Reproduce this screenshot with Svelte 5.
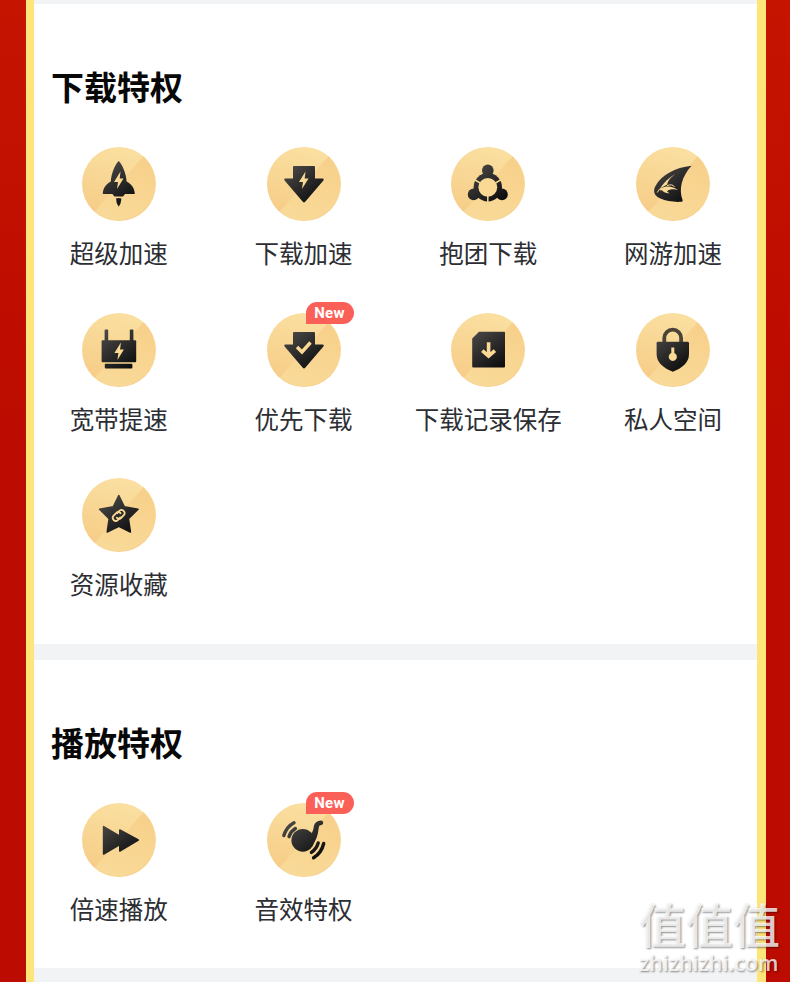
<script>
  const bolt = "M38.5 24.5 L32 35 H36 L35 42 L41.5 31.5 H37.7 Z";
  const downArrow =
    "M27 19 H47 Q48 19 48 20 V31.6 H56 Q57.4 32 56.4 33.4 L38.2 54.8 Q37 56 35.8 54.8 L17.6 33.4 Q16.6 32 18 31.6 H26 V20 Q26 19 27 19 Z";

  const sections = [
    {
      title: "下载特权",
      items: [
        { icon: "rocket", label: "超级加速" },
        { icon: "boost", label: "下载加速" },
        { icon: "group", label: "抱团下载" },
        { icon: "fin", label: "网游加速" },
        { icon: "router", label: "宽带提速" },
        { icon: "priority", label: "优先下载", isNew: true },
        { icon: "record", label: "下载记录保存" },
        { icon: "lock", label: "私人空间" },
        { icon: "star", label: "资源收藏" },
      ],
    },
    {
      title: "播放特权",
      items: [
        { icon: "forward", label: "倍速播放" },
        { icon: "music", label: "音效特权", isNew: true },
      ],
    },
  ];
</script>

<div class="page">
  <!-- gradients shared by all the icons -->
  <svg class="defs" width="0" height="0">
    <defs>
      <linearGradient id="gold" x1="0.4" y1="0" x2="0.1" y2="1">
        <stop offset="0" stop-color="#fadfa0" />
        <stop offset="1" stop-color="#f6ca84" />
      </linearGradient>
      <linearGradient id="shine" x1="0.9" y1="0" x2="0.5" y2="1">
        <stop offset="0" stop-color="#f7d08a" />
        <stop offset="1" stop-color="#f9d997" />
      </linearGradient>
      <linearGradient id="dark" gradientUnits="userSpaceOnUse" x1="22" y1="18" x2="50" y2="56">
        <stop offset="0" stop-color="#4b4a48" />
        <stop offset="1" stop-color="#0d0c0d" />
      </linearGradient>
    </defs>
  </svg>

  <main>
    {#each sections as section}
      <section>
        <h2>{section.title}</h2>
        <div class="grid">
          {#each section.items as item}
            <div class="item">
              <div class="icon">
                <svg viewBox="0 0 74 74" width="74" height="74">
                  <circle cx="37" cy="37" r="37" fill="url(#gold)" />
                  <path d="M61.4 9.2 A37 37 0 0 1 12.6 64.8 Z" fill="url(#shine)" />
                  <g fill="url(#dark)">
                    {#if item.icon === "rocket"}
                      <path d="M36.7 14 C41 18.5 44.2 27 44.6 34.5 C49.5 37 52.5 41 52.8 47 H43 L41 49.5 H32.4 L30.4 47 H20.8 C21 41 24 37 28.8 34.5 C29.2 27 32.4 18.5 36.7 14 Z" />
                      <path d="M34 51.5 Q36.7 50.5 39.4 51.5 Q39.4 56 36.7 59.8 Q34 56 34 51.5 Z" />
                      <path class="cut" d={bolt} />
                    {:else if item.icon === "boost"}
                      <path d={downArrow} />
                      <path class="cut" d={bolt} />
                    {:else if item.icon === "group"}
                      <circle cx="36.8" cy="23.4" r="5.8" />
                      <circle cx="22.6" cy="47.4" r="5.8" />
                      <circle cx="51" cy="47.4" r="5.8" />
                      <circle cx="36.8" cy="40.3" r="14.2" />
                      <circle class="cut" cx="36.8" cy="40.3" r="9.4" />
                      <path class="cut-line thin" d="M36.8 48 V56 M30 36.5 L23.5 32.7 M43.6 36.5 L50.1 32.7" />
                    {:else if item.icon === "fin"}
                      <path d="M55.6 18.8 C39 20.5 25.5 28 19.2 39.5 C16.8 44.5 18.3 49 24.5 51.6 C30 54 38 55.4 45.5 54.8 Q47.2 54.6 46.6 53 C42.6 42.5 45.5 29.5 55.6 18.8 Z" />
                      <path class="cut" d="M44.5 24.6 C35.5 28.5 29.5 33.5 24 41.6 C31.5 37.8 36.5 39.5 42 43 C37.5 41.8 33.5 42.3 31 44.3 L33.5 46.4 Q28 46 26 43.2 L24.3 43.4 L24 41.6 L31.2 37.6 C32 33 36.5 28 44.5 24.6 Z" />
                      <path class="cut-line hair" d="M31 38.6 Q36.5 36.5 38.5 40 M24 41.6 L21.2 45.5" />
                    {:else if item.icon === "router"}
                      <rect x="22.6" y="16.6" width="3.6" height="13" rx="1" />
                      <rect x="47.8" y="16.6" width="3.6" height="13" rx="1" />
                      <rect x="19.6" y="27.2" width="34.6" height="22" rx="1" />
                      <rect x="22.8" y="50.8" width="27.6" height="4.6" rx="1" />
                      <path class="cut" d={bolt} transform="translate(0.4 5)" />
                    {:else if item.icon === "priority"}
                      <path d={downArrow} />
                      <path class="cut-line check" d="M30 34 L35 39 L43.5 29.5" />
                    {:else if item.icon === "record"}
                      <path d="M28 18.8 H53 Q54 18.8 54 19.8 V53.6 Q54 54.6 53 54.6 H22.2 Q21.2 54.6 21.2 53.6 V25.4 Z" />
                      <path class="cut-line" d="M37.6 29.2 V43.5 M31.3 37.6 L37.6 43.2 L43.9 37.6" />
                    {:else if item.icon === "lock"}
                      <path class="line" d="M28.3 31 V25 A8.4 8.4 0 0 1 45.1 25 V31" />
                      <path d="M22 28.8 H51.6 Q53 28.8 53 30.2 V41 C53 50 46 55 36.8 58.8 C27.6 55 20.6 50 20.6 41 V30.2 Q20.6 28.8 22 28.8 Z" />
                      <path class="cut" d="M35.3 34.5 H38.3 V40 A4.1 4.1 0 1 1 35.3 40 Z" />
                    {:else if item.icon === "star"}
                      <path class="round" d="M36.8 17.5 L42.3 28.8 L56 31.2 L46.4 40.6 L48.4 54 L36.8 48.2 L25.2 54 L27.2 40.6 L17.6 31.2 L31.3 28.8 Z" />
                      <g class="chain">
                        <path d="M35.2 35.2 L37.6 32.6 Q39.6 31 41.6 32.8 Q43.6 34.8 42 37 L38.8 40.2 Q36.6 41.8 34.8 39.6" />
                        <path d="M38.2 39.4 L35.8 42.2 Q33.6 43.8 31.6 42 Q29.8 40 31.4 37.8 L34.6 34.6 Q36.8 33.2 38.6 35.2" />
                      </g>
                    {:else if item.icon === "forward"}
                      <path class="round" d="M21.6 23.6 L37.8 33.2 V27 L56.2 37 L37.8 48 V41.6 L21.6 51 Z" />
                    {:else if item.icon === "music"}
                      <circle cx="35.8" cy="37.3" r="11.4" />
                      <path d="M42 34 Q46.4 29 46.8 23.5 Q47.6 18 54.3 17.6 Q56.8 18.3 56 21 Q55 22.4 52.6 22.4 Q51.8 23 51.4 27 Q50.4 36 45.5 42 Z" />
                      <path class="line wave" d="M16.8 32.6 Q19.5 23.6 27 19.7 M22 33.6 Q23.8 28.2 28.4 25.6" />
                      <path class="line wave" d="M56.7 40.5 Q54.4 50 46.6 54.8 M51.2 40 Q49.4 46 44.4 49.4" />
                    {/if}
                  </g>
                </svg>
                {#if item.isNew}<span class="badge">New</span>{/if}
              </div>
              <span class="label">{item.label}</span>
            </div>
          {/each}
        </div>
      </section>
    {/each}
  </main>

  <div class="watermark">
    <div class="mark">值值值</div>
    <div class="site">zhizhizhi.com</div>
  </div>
</div>

<style>
  :global(body) {
    background: #bc0b00;
  }
  .page {
    position: relative;
    box-sizing: border-box;
    width: 790px;
    height: 982px;
    padding: 0 24px 0 26px;
    overflow: hidden;
    background: linear-gradient(#c51400, #bc0b00 45%);
    font-family: "Noto Sans CJK SC", sans-serif;
  }
  .defs {
    position: absolute;
  }
  main {
    box-sizing: border-box;
    height: 982px;
    padding: 4px 0 0;
    border: solid #fde57a;
    border-width: 0 9px 0 8px;
    background: #f2f3f5;
  }
  section {
    box-sizing: border-box;
    height: 640px;
    padding: 58px 0 0;
    background: #fff;
  }
  section + section {
    height: 308px;
    margin-top: 16px;
  }
  h2 {
    margin: 0 0 37px 17px;
    font-size: 33px;
    line-height: 48px;
    font-weight: 700;
    color: #080808;
  }
  .grid {
    display: grid;
    grid-template-columns: repeat(4, 184.8px);
    grid-auto-rows: 165.5px;
    margin-left: -7.7px;
  }
  .item {
    display: flex;
    flex-direction: column;
    align-items: center;
  }
  .icon {
    position: relative;
    height: 74px;
  }
  .icon svg {
    display: block;
  }
  .label {
    margin-top: 14px;
    font-size: 24.5px;
    line-height: 36px;
    color: #2c2e33;
    white-space: nowrap;
  }
  .badge {
    position: absolute;
    left: 39px;
    top: -11px;
    width: 48px;
    height: 22px;
    border-radius: 11px 11px 11px 0;
    background: #fb6058;
    color: #fff;
    font: 700 15px/22px Roboto, sans-serif;
    letter-spacing: 0.3px;
    text-align: center;
  }
  .cut {
    fill: #fad994;
  }
  .cut-line {
    fill: none;
    stroke: #fad994;
    stroke-width: 3.6;
  }
  .thin {
    stroke-width: 1.5;
  }
  .hair {
    stroke-width: 1;
  }
  .check {
    stroke-width: 3.4;
  }
  .line {
    fill: none;
    stroke: #4b4338;
    stroke-width: 3.8;
  }
  .wave {
    stroke: url(#dark);
    stroke-width: 3.4;
    stroke-linecap: round;
  }
  .round {
    stroke: url(#dark);
    stroke-width: 1.6;
    stroke-linejoin: round;
  }
  .chain {
    fill: none;
    stroke: #fad994;
    stroke-width: 1.8;
    stroke-linecap: round;
  }
  .watermark {
    position: absolute;
    left: 639px;
    top: 896px;
    width: 145px;
    color: rgba(255, 255, 255, 0.8);
    text-shadow: 1px 1px 2px rgba(0, 0, 0, 0.45);
    white-space: nowrap;
  }
  .mark {
    font-size: 47px;
    line-height: 54px;
    font-weight: 500;
  }
  .site {
    font: 600 21.4px/26px "Open Sans", sans-serif;
  }
</style>
